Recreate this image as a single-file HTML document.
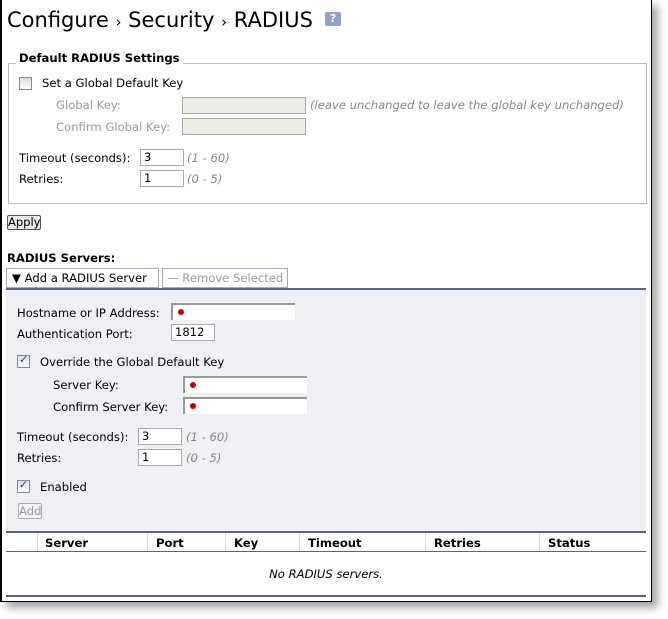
<!DOCTYPE html>
<html><head><meta charset="utf-8"><style>
*{margin:0;padding:0;box-sizing:border-box}
body{width:668px;height:619px;background:#fff;position:relative;overflow:hidden;font-family:"DejaVu Sans","Liberation Sans",sans-serif;font-size:11.6px;color:#000}
.a{position:absolute;white-space:nowrap}
.frame{position:absolute;left:0;top:0;width:652px;height:602px;border:1px solid #000;border-top:none;border-left:2px solid #000;box-shadow:6px 6px 8px rgba(0,0,0,.35)}
.inp{position:absolute;background:#fff;border:1px solid #aaa;height:17px;font-size:11.5px;padding-left:3px;line-height:15px}
.dis{background:#ecebe6;border-color:#aaa}
.req{border-top:2px solid #999;border-left:2px solid #999;border-right:none;border-bottom:none}
.req:after{content:"";position:absolute;left:5px;top:4px;width:6px;height:6px;border-radius:3px;background:#c00}
.cb{position:absolute;width:13px;height:13px;border:1px solid #7a8aa0;background:linear-gradient(#ddd,#fff)}
.cb.on:after{content:"✓";position:absolute;left:1px;top:-3px;font-size:11px;color:#2a3a9a;font-weight:bold}
.g{color:#999}
.i{color:#888;font-style:italic}
.b{font-weight:bold}
</style></head><body>
<div class="frame"></div>
<div class="a" style="left:7px;top:8px;font-size:21px;font-family:'DejaVu Sans',sans-serif">Configure <span style="font-size:15px">›</span> Security <span style="font-size:15px">›</span> RADIUS</div>
<div class="a" style="left:325px;top:12px;width:16px;height:14px;background:#8fa3c8;border-radius:2px;color:#fff;font-size:11px;font-weight:bold;text-align:center;line-height:14px">?</div>

<div class="a" style="left:8px;top:63px;width:639px;height:141px;border:1px solid #bbb"></div>
<div class="a b" style="left:16px;top:51px;background:#fff;padding:0 3px">Default RADIUS Settings</div>
<div class="cb" style="left:19px;top:77px"></div>
<div class="a" style="left:42px;top:76px">Set a Global Default Key</div>
<div class="a g" style="left:56px;top:98px">Global Key:</div>
<div class="inp dis" style="left:182px;top:97px;width:124px"></div>
<div class="a i" style="left:310px;top:98px">(leave unchanged to leave the global key unchanged)</div>
<div class="a g" style="left:56px;top:120px">Confirm Global Key:</div>
<div class="inp dis" style="left:182px;top:118px;width:124px"></div>
<div class="a" style="left:19px;top:151px">Timeout (seconds):</div>
<div class="inp" style="left:140px;top:149px;width:44px">3</div>
<div class="a i" style="left:187px;top:151px">(1 - 60)</div>
<div class="a" style="left:19px;top:172px">Retries:</div>
<div class="inp" style="left:140px;top:170px;width:44px">1</div>
<div class="a i" style="left:187px;top:172px">(0 - 5)</div>

<div class="a" style="left:7px;top:215px;width:34px;height:15px;border:1px solid #555;border-radius:2px;background:#e8e8e8;font-size:11.5px;line-height:13px;text-align:center">Apply</div>

<div class="a b" style="left:7px;top:251px">RADIUS Servers:</div>
<div class="a" style="left:6px;top:268px;width:153px;height:20px;border:1px solid #aab;background:#fff;padding-left:5px;line-height:18px">▼ Add a RADIUS Server</div>
<div class="a" style="left:162px;top:268px;width:126px;height:20px;border:1px solid #aab;background:#fff;padding-left:4px;line-height:18px;color:#999">— Remove Selected</div>

<div class="a" style="left:6px;top:288px;width:640px;height:244px;background:#eef0f4;border-top:2px solid #5a6580"></div>
<div class="a" style="left:17px;top:306px">Hostname or IP Address:</div>
<div class="inp req" style="left:171px;top:303px;width:124px"></div>
<div class="a" style="left:17px;top:327px">Authentication Port:</div>
<div class="inp" style="left:171px;top:324px;width:44px">1812</div>
<div class="cb on" style="left:17px;top:355px"></div>
<div class="a" style="left:40px;top:355px">Override the Global Default Key</div>
<div class="a" style="left:53px;top:378px">Server Key:</div>
<div class="inp req" style="left:183px;top:376px;width:124px"></div>
<div class="a" style="left:53px;top:400px">Confirm Server Key:</div>
<div class="inp req" style="left:183px;top:397px;width:124px"></div>
<div class="a" style="left:17px;top:430px">Timeout (seconds):</div>
<div class="inp" style="left:138px;top:428px;width:44px">3</div>
<div class="a i" style="left:186px;top:430px">(1 - 60)</div>
<div class="a" style="left:17px;top:451px">Retries:</div>
<div class="inp" style="left:138px;top:449px;width:44px">1</div>
<div class="a i" style="left:186px;top:451px">(0 - 5)</div>
<div class="cb on" style="left:17px;top:480px"></div>
<div class="a" style="left:40px;top:480px">Enabled</div>
<div class="a" style="left:18px;top:503px;width:24px;height:16px;border:1px solid #aaa;border-radius:2px;color:#999;line-height:14px;text-align:center;background:#f4f4f4">Add</div>

<div class="a" style="left:6px;top:531px;width:640px;height:2px;background:#5a6580"></div>
<div class="a" style="left:6px;top:551px;width:640px;height:1px;background:#5a6580"></div>
<div class="a" style="left:6px;top:595px;width:640px;height:2px;background:#5a6580"></div>
<div class="a" style="left:37px;top:533px;width:1px;height:18px;background:#ddd"></div>
<div class="a" style="left:147px;top:533px;width:1px;height:18px;background:#ddd"></div>
<div class="a" style="left:225px;top:533px;width:1px;height:18px;background:#ddd"></div>
<div class="a" style="left:299px;top:533px;width:1px;height:18px;background:#ddd"></div>
<div class="a" style="left:425px;top:533px;width:1px;height:18px;background:#ddd"></div>
<div class="a" style="left:539px;top:533px;width:1px;height:18px;background:#ddd"></div>
<div class="a b" style="left:45px;top:536px">Server</div>
<div class="a b" style="left:156px;top:536px">Port</div>
<div class="a b" style="left:234px;top:536px">Key</div>
<div class="a b" style="left:308px;top:536px">Timeout</div>
<div class="a b" style="left:434px;top:536px">Retries</div>
<div class="a b" style="left:548px;top:536px">Status</div>
<div class="a" style="left:6px;top:567px;width:640px;text-align:center;font-style:italic">No RADIUS servers.</div>
</body></html>
